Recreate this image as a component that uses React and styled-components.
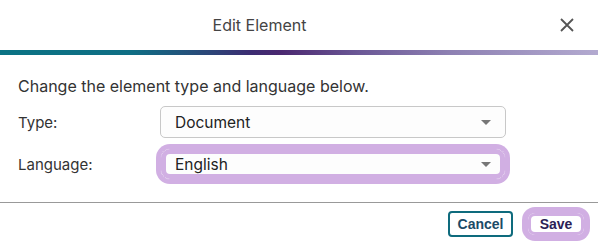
import styled, { createGlobalStyle } from "styled-components";

const GlobalStyle = createGlobalStyle`
  body {
    margin: 0;
    background: #fff;
    font-family: Inter, "Noto Sans", sans-serif;
  }
`;

const Dialog = styled.div`
  width: 598px;
  height: 245px;
  background: #fff;
  display: flex;
  flex-direction: column;
`;

const Header = styled.header`
  height: 50px;
  display: flex;
  align-items: center;
  padding-right: 24px;
`;

const Title = styled.h2`
  flex: 1;
  margin: 0;
  text-align: center;
  font-size: 16px;
  font-weight: 400;
  color: #444;
`;

const CloseButton = styled.button`
  margin-left: 41px;
  width: 14px;
  height: 14px;
  padding: 0;
  border: 0;
  background: none;
  display: flex;
  cursor: pointer;
`;

const GradientBar = styled.div`
  height: 5px;
  background: linear-gradient(
    90deg,
    #0b7384 0%,
    #0f6e84 22%,
    #2c4678 35%,
    #3c2c72 42%,
    #4b2870 47%,
    #6b5896 60%,
    #8d80b2 75%,
    #b3aad0 100%
  );
`;

const Body = styled.div`
  padding: 21px 92px 22px 18px;
`;

const Intro = styled.p`
  margin: 0 0 10px;
  font-size: 16px;
  line-height: 20px;
  color: #333;
`;

const Form = styled.div`
  display: grid;
  grid-template-columns: 142px 1fr;
  row-gap: 10px;
  align-items: center;
`;

const Label = styled.label`
  font-size: 15px;
  color: #333;
`;

const Select = styled.div`
  height: 32px;
  box-sizing: border-box;
  display: flex;
  align-items: center;
  justify-content: space-between;
  padding: 0 14px 0 14px;
  font-size: 15.5px;
  color: #222;
  background: #fdfdfd;
  border: 1px solid ${(p) => (p.$focused ? "#d1afe3" : "#c8c8c8")};
  border-radius: ${(p) => (p.$focused ? "10px" : "5px")};
  box-shadow: ${(p) =>
    p.$focused ? "0 0 0 4px #d1afe3, inset 0 0 0 5px #d1afe3" : "none"};
`;

const Caret = styled.span`
  width: 0;
  height: 0;
  border-left: 5px solid transparent;
  border-right: 5px solid transparent;
  border-top: 5px solid #777;
`;

const Footer = styled.footer`
  border-top: 1px solid #999;
  display: flex;
  justify-content: flex-end;
  align-items: center;
  gap: 13px;
  padding: 8px 12px 0 0;
`;

const Button = styled.button`
  width: ${(p) => (p.$primary ? "60px" : "65px")};
  height: 26px;
  box-sizing: border-box;
  padding: 0;
  font-family: "Liberation Sans", Arial, sans-serif;
  font-size: 14px;
  font-weight: 700;
  background: #fff;
  cursor: pointer;
  color: ${(p) => (p.$primary ? "#2b2156" : "#1b4a66")};
  border: 2px solid ${(p) => (p.$primary ? "#d1afe3" : "#0e6b7d")};
  border-radius: ${(p) => (p.$primary ? "9px" : "4px")};
  box-shadow: ${(p) =>
    p.$primary ? "0 0 0 4px #d1afe3, inset 0 0 0 3px #d1afe3" : "none"};
`;

export default function App() {
  return (
    <>
      <GlobalStyle />
      <Dialog>
        <Header>
          <Title>Edit Element</Title>
          <CloseButton aria-label="Close">
            <svg width="14" height="14" viewBox="0 0 14 14">
              <path
                d="M1 1 L13 13 M13 1 L1 13"
                stroke="#555"
                strokeWidth="1.8"
                fill="none"
              />
            </svg>
          </CloseButton>
        </Header>
        <GradientBar />
        <Body>
          <Intro>Change the element type and language below.</Intro>
          <Form>
            <Label>Type:</Label>
            <Select>
              Document
              <Caret />
            </Select>
            <Label>Language:</Label>
            <Select $focused>
              English
              <Caret />
            </Select>
          </Form>
        </Body>
        <Footer>
          <Button>Cancel</Button>
          <Button $primary>Save</Button>
        </Footer>
      </Dialog>
    </>
  );
}
